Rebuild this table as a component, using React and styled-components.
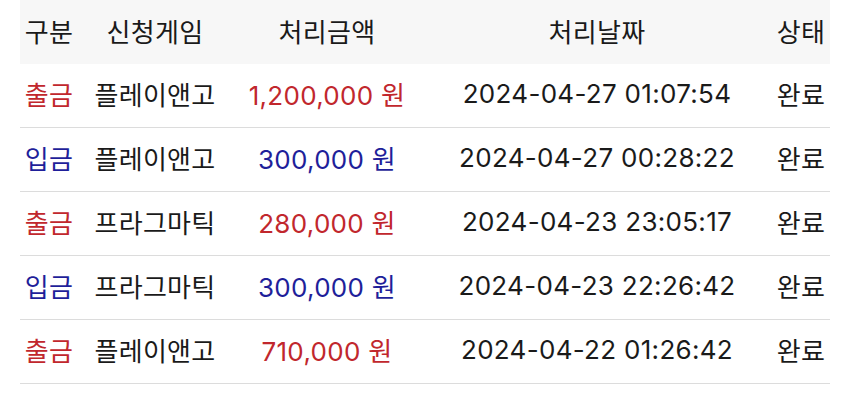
import React from "react";
import styled, { createGlobalStyle } from "styled-components";

const Global = createGlobalStyle`
  html, body { margin: 0; padding: 0; background: #ffffff; }
  body { font-family: "Inter", "Noto Sans CJK KR", sans-serif; }
`;

const Page = styled.div`
  padding: 0 20px;
  background: #fff;
`;

const Table = styled.div`
  width: 810px;
  display: grid;
  grid-template-columns: 58px 154px 190px 350px 58px;
`;

const Row = styled.div`
  display: contents;
`;

const Cell = styled.div`
  height: 64px;
  box-sizing: border-box;
  display: flex;
  align-items: center;
  justify-content: center;
  white-space: nowrap;
  font-family: "Inter", "Noto Sans CJK KR", sans-serif;
  font-size: 26px;
  letter-spacing: 0.3px;
  color: ${(p) => (p.$tone === "out" ? "#c1272d" : p.$tone === "in" ? "#1f1f9a" : "#1a1a1a")};
  background: ${(p) => (p.$head ? "#f7f7f7" : "#ffffff")};
  border-bottom: ${(p) => (p.$head ? "none" : "1px solid #dcdcdc")};
  padding-bottom: 4px;
`;

const headers = ["구분", "신청게임", "처리금액", "처리날짜", "상태"];

const rows = [
  { type: "출금", tone: "out", game: "플레이앤고", amount: "1,200,000 원", date: "2024-04-27 01:07:54" },
  { type: "입금", tone: "in", game: "플레이앤고", amount: "300,000 원", date: "2024-04-27 00:28:22" },
  { type: "출금", tone: "out", game: "프라그마틱", amount: "280,000 원", date: "2024-04-23 23:05:17" },
  { type: "입금", tone: "in", game: "프라그마틱", amount: "300,000 원", date: "2024-04-23 22:26:42" },
  { type: "출금", tone: "out", game: "플레이앤고", amount: "710,000 원", date: "2024-04-22 01:26:42" },
];

export default function App() {
  return (
    <>
      <Global />
      <Page>
        <Table>
          <Row>
            {headers.map((h) => (
              <Cell key={h} $head>
                {h}
              </Cell>
            ))}
          </Row>
          {rows.map((r, i) => (
            <Row key={i}>
              <Cell $tone={r.tone}>{r.type}</Cell>
              <Cell>{r.game}</Cell>
              <Cell $tone={r.tone}>{r.amount}</Cell>
              <Cell>{r.date}</Cell>
              <Cell>완료</Cell>
            </Row>
          ))}
        </Table>
      </Page>
    </>
  );
}
